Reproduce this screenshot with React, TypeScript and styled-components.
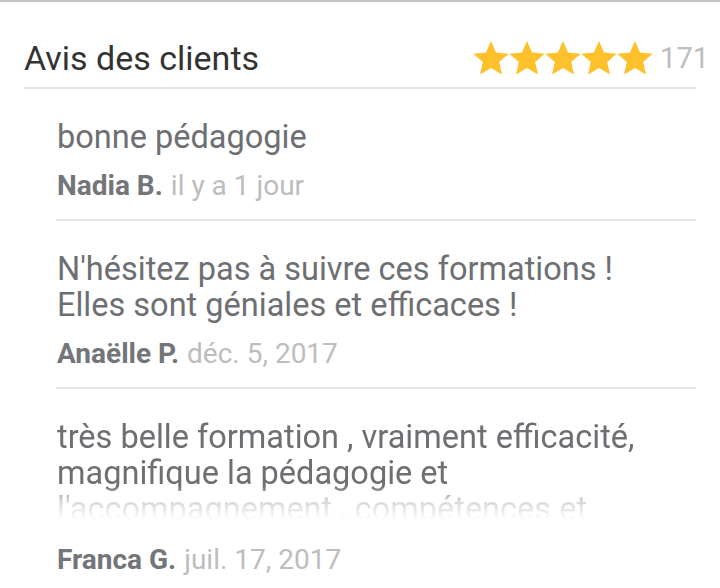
import styled, { createGlobalStyle } from "styled-components";

const colors = {
  title: '#333333',
  body: '#6d6f73',
  name: '#737579',
  muted: '#bdbdbd',
  line: '#e5e5e5',
  star: '#fec02b'
}

const Global = createGlobalStyle`
  html, body {
    margin: 0;
    padding: 0;
    background: #fff;
    font-family: Roboto, 'Noto Sans', sans-serif;
  }
`;

const Page = styled.div`
  width: 720px;
  height: 588px;
  overflow: hidden;
  border-top: 2px solid #c4c4c4;
  box-sizing: border-box;
  padding: 0 24px;
`;

const Header = styled.div`
  display: flex;
  align-items: center;
  justify-content: space-between;
  height: 87px;
  box-sizing: border-box;
  padding-top: 27px;
  border-bottom: 2px solid ${colors.line};
`;

const Title = styled.h2`
  margin: 0;
  font-size: 34px;
  font-weight: 400;
  color: ${colors.title};
`;

const Rating = styled.div`
  display: flex;
  align-items: center;
  margin-right: -13px;
`;

const Count = styled.span`
  margin-left: 7px;
  font-size: 29px;
  color: ${colors.muted};
`;

const List = styled.div`
  padding-left: 32px;
`;

const Review = styled.div<{ $last?: boolean }>`
  padding: 30px 0 ${p => (p.$last ? 0 : 17)}px 1px;
  border-bottom: ${p => (p.$last ? 'none' : `2px solid ${colors.line}`)};
`;

const Body = styled.p<{ $clip?: boolean }>`
  margin: 0;
  font-size: 32.5px;
  line-height: 36px;
  white-space: pre-line;
  color: ${colors.body};
  ${p => p.$clip && `
    max-height: 101px;
    overflow: hidden;
    -webkit-mask-image: linear-gradient(to bottom, #000 66%, rgba(0,0,0,0.3) 80%, transparent 100%);
    mask-image: linear-gradient(to bottom, #000 66%, rgba(0,0,0,0.3) 80%, transparent 100%);
  `}
`;

const Meta = styled.div<{ $gap?: number }>`
  margin-top: ${p => p.$gap ?? 15}px;
  font-size: 28px;
  line-height: 32px;
`;

const Name = styled.span`
  font-weight: 700;
  color: ${colors.name};
`;

const When = styled.span`
  margin-left: 8px;
  color: ${colors.muted};
`;

const Star = () => (
  <svg width="36" height="36" viewBox="1 1 22 22">
    <path
      fill={colors.star}
      d="M12 1.6l3.1 7.1 7.7.7-5.8 5.1 1.7 7.6L12 18.1l-6.7 4 1.7-7.6-5.8-5.1 7.7-.7z"
    />
  </svg>
);

const reviews = [
  { text: 'bonne pédagogie', name: 'Nadia B.', when: 'il y a 1 jour' },
  {
    text: "N'hésitez pas à suivre ces formations !\nElles sont géniales et efficaces !",
    name: 'Anaëlle P.',
    when: 'déc. 5, 2017'
  },
  {
    text: "très belle formation , vraiment efficacité, magnifique la pédagogie et l'accompagnement , compétences et disponibilité des formateurs.",
    name: 'Franca G.',
    when: 'juil. 17, 2017',
    clip: true
  }
];

export default function App() {
  return (
    <>
      <Global />
      <Page>
        <Header>
          <Title>Avis des clients</Title>
          <Rating>
            <Star /><Star /><Star /><Star /><Star />
            <Count>171</Count>
          </Rating>
        </Header>
        <List>
          {reviews.map((r, i) => (
            <Review key={i} $last={i === reviews.length - 1}>
              <Body $clip={r.clip}>{r.text}</Body>
              <Meta $gap={r.clip ? 24 : 15}>
                <Name>{r.name}</Name>
                <When>{r.when}</When>
              </Meta>
            </Review>
          ))}
        </List>
      </Page>
    </>
  );
}
